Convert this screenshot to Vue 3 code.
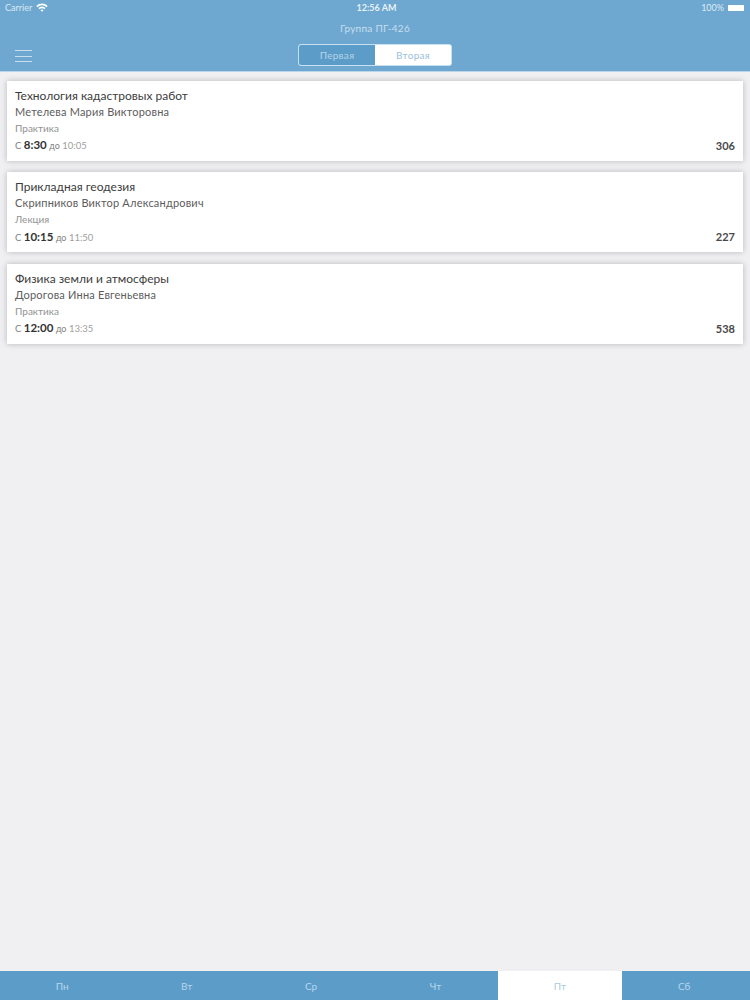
<template>
  <div class="screen">
    <header class="header">
      <div class="status">
        <div class="status-left">
          <span>Carrier</span>
          <svg class="wifi" width="12" height="9" viewBox="0 0 12 9">
            <path d="M0.3 3 A8 8 0 0 1 11.7 3 L10.5 4.3 A6.2 6.2 0 0 0 1.5 4.3 Z" fill="#fff" />
            <path d="M2.4 5.1 A5 5 0 0 1 9.6 5.1 L8.4 6.3 A3.2 3.2 0 0 0 3.6 6.3 Z" fill="#fff" />
            <path d="M4.5 7.2 A2.1 2.1 0 0 1 7.5 7.2 L6 8.8 Z" fill="#fff" />
          </svg>
        </div>
        <span class="clock">12:56 AM</span>
        <div class="status-right">
          <span>100%</span>
          <span class="battery"></span>
        </div>
      </div>
      <div class="group">Группа ПГ-426</div>
      <div class="toolbar">
        <button class="menu" aria-label="Меню">
          <span></span>
          <span></span>
          <span></span>
        </button>
        <div class="switch">
          <button
            v-for="(week, i) in weeks"
            :key="week"
            class="switch-item"
            :class="{ selected: i === 0 }"
          >
            {{ week }}
          </button>
        </div>
      </div>
    </header>

    <main class="list">
      <article v-for="lesson in lessons" :key="lesson.title" class="card">
        <div class="title">{{ lesson.title }}</div>
        <div class="teacher">{{ lesson.teacher }}</div>
        <div class="kind">{{ lesson.kind }}</div>
        <div class="bottom">
          <div class="time">
            С <b>{{ lesson.start }}</b> <small>до</small> <span class="end">{{ lesson.end }}</span>
          </div>
          <div class="room">{{ lesson.room }}</div>
        </div>
      </article>
    </main>

    <nav class="tabs">
      <button
        v-for="day in days"
        :key="day"
        class="tab"
        :class="{ active: day === activeDay }"
      >
        {{ day }}
      </button>
    </nav>
  </div>
</template>

<script setup>
const weeks = ["Первая", "Вторая"];
const days = ["Пн", "Вт", "Ср", "Чт", "Пт", "Сб"];
const activeDay = "Пт";

const lessons = [
  {
    title: "Технология кадастровых работ",
    teacher: "Метелева Мария Викторовна",
    kind: "Практика",
    start: "8:30",
    end: "10:05",
    room: "306"
  },
  {
    title: "Прикладная геодезия",
    teacher: "Скрипников Виктор Александрович",
    kind: "Лекция",
    start: "10:15",
    end: "11:50",
    room: "227"
  },
  {
    title: "Физика земли и атмосферы",
    teacher: "Дорогова Инна Евгеньевна",
    kind: "Практика",
    start: "12:00",
    end: "13:35",
    room: "538"
  }
];
</script>

<style>
html,
body {
  margin: 0;
  background: #f0eff1;
}
</style>

<style scoped>
.screen {
  height: 1000px;
  display: flex;
  flex-direction: column;
  background: #f0eff1;
  font-family: Lato, "Open Sans", sans-serif;
  overflow: hidden;
}

.header {
  height: 71px;
  background: #6ea8d0;
  border-bottom: 1px solid #b9d6ea;
  color: #fff;
  flex-shrink: 0;
}

.status {
  height: 15px;
  padding: 0 5px;
  display: grid;
  grid-template-columns: 1fr auto 1fr;
  align-items: center;
  font-size: 9px;
  color: #dbe9f4;
}

.status-left,
.status-right {
  display: flex;
  align-items: center;
  gap: 4px;
}

.status-right {
  justify-content: flex-end;
}

.clock {
  margin-left: 3px;
  font-weight: 700;
  color: #e6f0f7;
}

.battery {
  width: 16px;
  height: 6px;
  background: #fff;
  display: block;
  margin-right: 1px;
}

.group {
  margin-top: 6px;
  height: 14px;
  line-height: 14px;
  text-align: center;
  font-size: 10px;
  letter-spacing: 0.25px;
  color: #c6deef;
}

.toolbar {
  position: relative;
  margin-top: 9px;
  height: 22px;
  display: flex;
  justify-content: center;
}

.menu {
  position: absolute;
  left: 15px;
  top: 6px;
  width: 17px;
  height: 12px;
  padding: 0;
  border: 0;
  background: none;
  display: flex;
  flex-direction: column;
  justify-content: space-between;
}

.menu span {
  height: 1px;
  background: #c9dfee;
}

.switch {
  width: 154px;
  height: 22px;
  box-sizing: border-box;
  display: flex;
  border: 1px solid #c9e0f0;
  border-radius: 3px;
  background: #fff;
  overflow: hidden;
}

.switch-item {
  flex: 1;
  padding: 0;
  border: 0;
  background: #fff;
  color: #9dc1dc;
  font: inherit;
  font-size: 10px;
  letter-spacing: 0.3px;
}

.switch-item.selected {
  background: #5b9cc9;
  color: #b5d3e8;
}

.list {
  flex: 1;
  padding: 8.75px 7px;
  display: flex;
  flex-direction: column;
  gap: 11.5px;
}

.card {
  height: 80px;
  box-sizing: border-box;
  padding: 6px 8px 0;
  background: #fff;
  box-shadow: 0 0 6px rgba(0, 0, 0, 0.24);
}

.title {
  font-size: 12px;
  line-height: 17px;
  color: #3c3c3c;
}

.teacher {
  font-size: 11px;
  line-height: 16px;
  color: #5c5c5c;
  letter-spacing: 0.2px;
}

.kind {
  font-size: 10px;
  line-height: 16px;
  color: #929292;
}

.bottom {
  margin-top: 0.5px;
  display: flex;
  justify-content: space-between;
  align-items: center;
  line-height: 17px;
}

.time {
  font-size: 9.5px;
  color: #808080;
}

.time b {
  font-size: 11.5px;
  color: #333;
}

.time small {
  font-size: 9px;
}

.end {
  color: #a0a0a0;
}

.room {
  font-size: 11px;
  font-weight: 700;
  color: #484848;
}

.tabs {
  height: 29px;
  flex-shrink: 0;
  box-sizing: border-box;
  padding-right: 3.6px;
  display: flex;
  background: #5b9cc9;
}

.tab {
  flex: 1;
  padding: 0;
  border: 0;
  background: none;
  color: #b9d6ea;
  font: inherit;
  font-size: 10px;
}

.tab.active {
  background: #fff;
  color: #a8cbe0;
}
</style>
